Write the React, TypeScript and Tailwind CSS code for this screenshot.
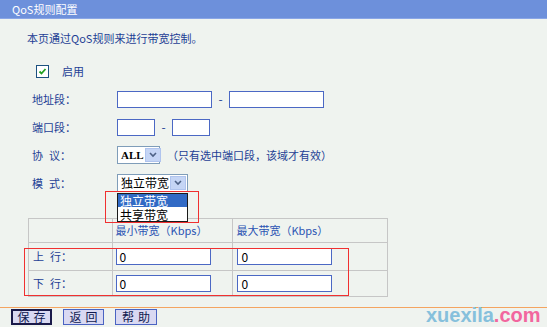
import React from 'react';

const font = { fontFamily: '"Noto Sans CJK SC", "Liberation Sans", sans-serif' };

function TextBox({ w, value = '' }: { w: string; value?: string }) {
  return (
    <div className={`${w} h-[17px] bg-white border border-[#4b68c4] text-[12px] leading-[15px] pl-[3px] text-black`}>
      {value}
    </div>
  );
}

function Select({ w, label, serif }: { w: string; label: string; serif?: boolean }) {
  return (
    <div className={`${w} h-[18px] bg-white border border-[#7f9db9] flex items-stretch`}>
      <span
        className={`flex-1 pl-[3px] text-black leading-[16px] whitespace-nowrap ${serif ? 'text-[11px] font-bold' : 'text-[12px]'}`}
        style={serif ? { fontFamily: '"Liberation Serif", serif' } : undefined}
      >
        {label}
      </span>
      <span className="w-[16px] shrink-0 m-[1px] bg-[#c5d5f5] border border-[#b0c4ee] flex items-center justify-center">
        <svg width="8" height="6" viewBox="0 0 8 6">
          <path d="M1 1 L4 4 L7 1" stroke="#4d6185" strokeWidth="1.6" fill="none" />
        </svg>
      </span>
    </div>
  );
}

// two-character label with the wide gap the page uses: "协 议："
function Spaced({ a, b }: { a: string; b: string }) {
  return (
    <>
      {a}
      <span className="inline-block w-[6px]" />
      {b}：
    </>
  );
}

function Row({ label, children }: { label: React.ReactNode; children?: React.ReactNode }) {
  return (
    <div className="h-[28px] flex items-center">
      <span className="w-[117px] pl-[32px] box-border shrink-0 text-[11px] text-[#1e3f95]">{label}</span>
      <div className="flex items-center">{children}</div>
    </div>
  );
}

const cell = 'border border-[#c6c6c6]';
const btn = 'h-[16px] bg-[#d9d9f2] text-[12px] text-[#101a50] tracking-[4px] pl-[4px] whitespace-nowrap';

export default function App() {
  return (
    <div className="relative w-[547px] h-[327px] overflow-hidden bg-[#eff3ef]" style={font}>
      <div className="h-[19px] bg-[#6d90db] border-b border-[#8aa6e6] text-white text-[11px] leading-[18px] pl-[12px]">
        QoS规则配置
      </div>

      <div className="mt-[12px] pl-[27px] h-[14px] text-[11px] leading-[14px] text-[#1e3f95]">
        本页通过QoS规则来进行带宽控制。
      </div>

      <div className="mt-[12px]">
        <div className="h-[28px] flex items-center pl-[36px]">
          <span className="w-[13px] h-[13px] bg-white border border-[#1c5180] flex items-center justify-center">
            <svg width="9" height="9" viewBox="0 0 9 9">
              <path d="M1.5 4.5 L3.5 6.5 L7.5 2" stroke="#21a121" strokeWidth="1.8" fill="none" />
            </svg>
          </span>
          <span className="ml-[13px] text-[11px] text-[#1e3f95]">启用</span>
        </div>
        <Row label="地址段：">
          <TextBox w="w-[95px]" />
          <span className="w-[17px] text-center text-[12px] text-[#1e3f95]">-</span>
          <TextBox w="w-[95px]" />
        </Row>
        <Row label="端口段：">
          <TextBox w="w-[38px]" />
          <span className="w-[17px] text-center text-[12px] text-[#1e3f95]">-</span>
          <TextBox w="w-[38px]" />
        </Row>
        <Row label={<Spaced a="协" b="议" />}>
          <Select w="w-[43px]" label="ALL" serif />
          <span className="ml-[7px] text-[11px] text-[#1e3f95]">（只有选中端口段，该域才有效）</span>
        </Row>
        <Row label={<Spaced a="模" b="式" />}>
          <Select w="w-[71px]" label="独立带宽" />
        </Row>
      </div>

      <table className="mt-[21px] ml-[28px] w-[360px] border-collapse border border-[#b8b8b8] text-[11px]">
        <colgroup>
          <col className="w-[84px]" />
          <col className="w-[121px]" />
          <col className="w-[155px]" />
        </colgroup>
        <tbody>
          <tr className="h-[24px]">
            <td className={cell}></td>
            <td className={`${cell} pl-[3px] text-[#2b53b3]`}>最小带宽（Kbps）</td>
            <td className={`${cell} pl-[3px] text-[#2b53b3]`}>最大带宽（Kbps）</td>
          </tr>
          <tr className="h-[28px]">
            <td className={`${cell} pl-[4px] text-[#1e3f95]`}><Spaced a="上" b="行" /></td>
            <td className={`${cell} pl-[3px]`}><TextBox w="w-[95px]" value="0" /></td>
            <td className={`${cell} pl-[4px]`}><TextBox w="w-[95px]" value="0" /></td>
          </tr>
          <tr className="h-[26px]">
            <td className={`${cell} pl-[4px] text-[#1e3f95]`}><Spaced a="下" b="行" /></td>
            <td className={`${cell} pl-[3px]`}><TextBox w="w-[95px]" value="0" /></td>
            <td className={`${cell} pl-[4px]`}><TextBox w="w-[95px]" value="0" /></td>
          </tr>
        </tbody>
      </table>

      <div className="mt-[10px] h-[1px] bg-[#f4a460]" />

      <div className="mt-[1px] flex gap-[11px] pl-[11px]">
        <button className={`${btn} w-[41px] border-2 border-[#1a1a4a] leading-[12px]`}>保存</button>
        <button className={`${btn} w-[41px] border border-[#4a63c2] leading-[14px]`}>返回</button>
        <button className={`${btn} w-[42px] border border-[#4a63c2] leading-[14px]`}>帮助</button>
      </div>

      {/* dropdown list */}
      <div className="absolute left-[117px] top-[193px] w-[71px] h-[29px] bg-white border border-[#1a1a1a] text-[12px]">
        <div className="h-[13px] leading-[13px] bg-[#316ac5] text-white pl-[2px]">独立带宽</div>
        <div className="h-[14px] leading-[14px] pt-[1px] text-black pl-[2px]">共享带宽</div>
      </div>

      {/* annotation boxes */}
      <div className="absolute left-[105px] top-[191px] w-[94px] h-[32px] border border-[#f03030]" />
      <div className="absolute left-[24px] top-[248px] w-[325px] h-[48px] border border-[#f03030]" />

      <div
        className="absolute left-[426px] top-[305px] text-[20px] font-bold leading-[20px]"
        style={{ fontFamily: '"Liberation Sans", Arial, sans-serif' }}
      >
        <span className="text-[#86c0dc]">xuexila</span>
        <span className="text-[#f2669e]">.com</span>
      </div>
    </div>
  );
}
